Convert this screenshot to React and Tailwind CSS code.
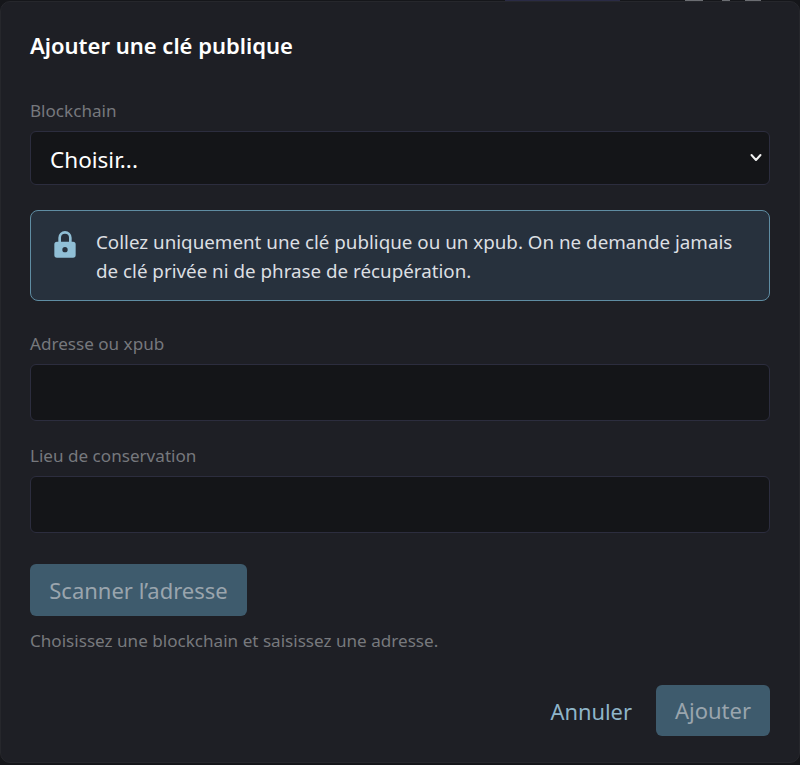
import React from "react";

function Field({ label, children, className = "" }) {
  return (
    <div className={className}>
      <div className="text-[17.1px] leading-[24px] text-[#76787d]">{label}</div>
      {children}
    </div>
  );
}

export default function App() {
  return (
    <div className="relative h-[765px] w-[800px] overflow-hidden bg-[#15161a] font-['Noto_Sans','Open_Sans',sans-serif]">
      <div className="absolute left-[505px] top-0 h-px w-[115px] bg-[#2a2b45]" />
      <div className="absolute left-[685px] top-0 h-px w-[18px] bg-[#6b6d72]" />
      <div className="absolute left-[722px] top-0 h-px w-[8px] bg-[#6b6d72]" />
      <div className="absolute left-[745px] top-0 h-px w-[16px] bg-[#6b6d72]" />
      <div className="absolute inset-x-0 top-px flex h-[762px] flex-col rounded-[10px] border border-[#26272c] bg-[#1e1f25] px-[29px] pt-[27px]">
        <h1 className="text-[22px] font-semibold leading-[32px] text-white">Ajouter une clé publique</h1>
        <Field label="Blockchain" className="mt-[38px]">
          <div className="mt-2 flex h-[54px] items-center justify-between rounded-md border border-[#2c2d3e] bg-[#141518] pl-[19px] pr-[5px] text-[22.5px] text-white">
            <span className="pt-[4px]">Choisir...</span>
            <svg className="mb-[2px]" width="16" height="16" viewBox="0 0 16 16" fill="none" stroke="#f1f1f1" strokeWidth="2" strokeLinecap="round" strokeLinejoin="round">
              <path d="M3.5 6l4.5 5 4.5-5" />
            </svg>
          </div>
        </Field>
        <div className="mt-[25px] flex h-[91px] items-start gap-[20px] rounded-lg border border-[#5f8da3] bg-[#27313d] px-[23px] pt-[17px]">
          <svg className="mt-[3px] shrink-0" width="22" height="28" viewBox="0 0 16 21" fill="#90bfd6">
            <path fillRule="evenodd" d="M8 0a5 5 0 0 0-5 5v3H2a2 2 0 0 0-2 2v8a2 2 0 0 0 2 2h12a2 2 0 0 0 2-2v-8a2 2 0 0 0-2-2h-1V5a5 5 0 0 0-5-5zM5 8V5a3 3 0 0 1 6 0v3H5zm3 4a2 2 0 1 1 0 4 2 2 0 0 1 0-4z" />
          </svg>
          <p className="text-[18.8px] leading-[29px] text-[#dcdfe2]">
            Collez uniquement une clé publique ou un xpub. On ne demande jamais de clé privée ni de phrase de récupération.
          </p>
        </div>
        <Field label="Adresse ou xpub" className="mt-[31px]">
          <div className="mt-2 h-[57px] rounded-md border border-[#2c2d3e] bg-[#141518]" />
        </Field>
        <Field label="Lieu de conservation" className="mt-[23px]">
          <div className="mt-2 h-[57px] rounded-md border border-[#2c2d3e] bg-[#141518]" />
        </Field>
        <button className="mt-[31px] flex h-[52px] w-[217px] items-center justify-center rounded-md bg-[#3e5b6d] text-[22px] text-[#9aa5ad]">
          Scanner l’adresse
        </button>
        <p className="mt-[13px] text-[17.1px] leading-[24px] text-[#77797d]">
          Choisissez une blockchain et saisissez une adresse.
        </p>
        <div className="mt-[32px] flex items-center justify-end gap-[24px]">
          <span className="pt-[2px] text-[21.9px] leading-[33px] text-[#8fb5c9]">Annuler</span>
          <button className="flex h-[51px] w-[114px] items-center justify-center rounded-md bg-[#3e5b6d] text-[22px] text-[#9aa5ad]">
            Ajouter
          </button>
        </div>
      </div>
    </div>
  );
}
